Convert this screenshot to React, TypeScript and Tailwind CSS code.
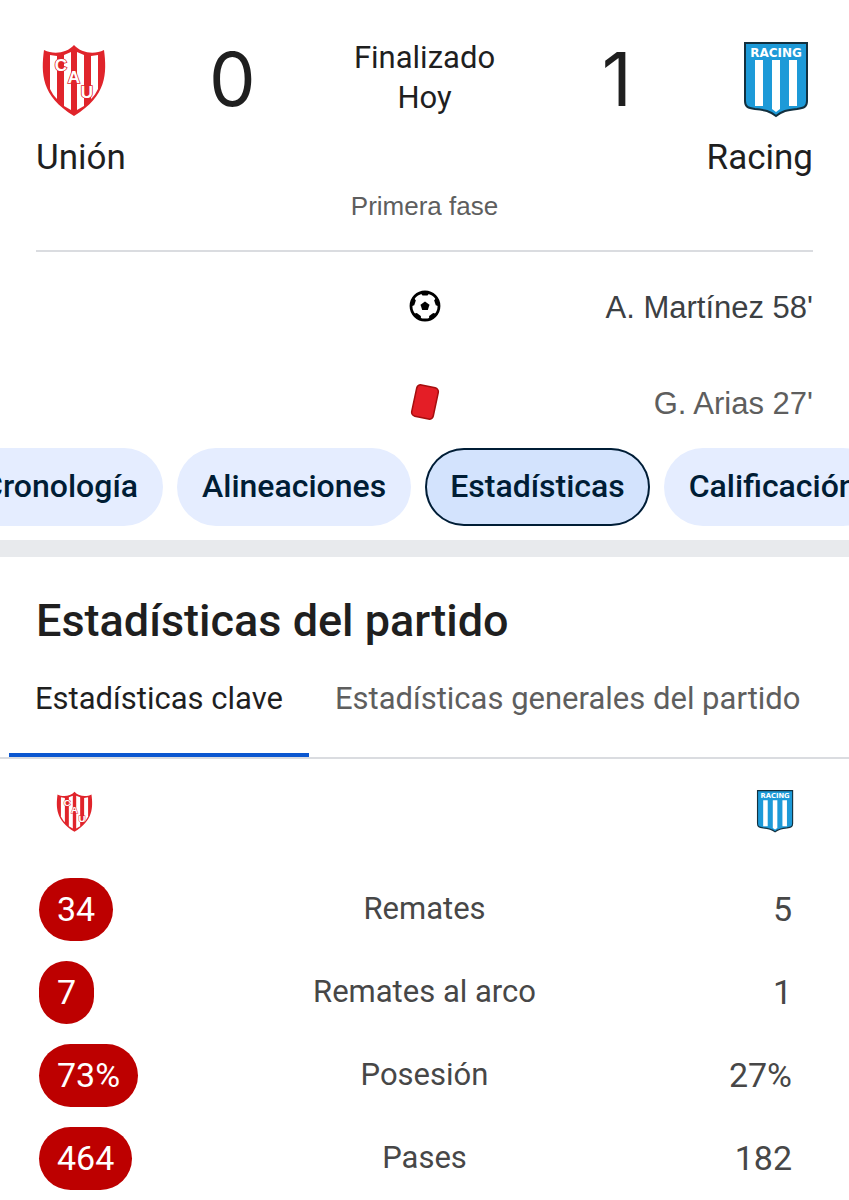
import clsx from "clsx";

type Stat = { label: string; home: string; away: string };

const CHIPS = ["Cronología", "Alineaciones", "Estadísticas", "Calificación"];

const TABS = ["Estadísticas clave", "Estadísticas generales del partido"];

const STATS: Stat[] = [
  { label: "Remates", home: "34", away: "5" },
  { label: "Remates al arco", home: "7", away: "1" },
  { label: "Posesión", home: "73%", away: "27%" },
  { label: "Pases", home: "464", away: "182" },
];

function UnionCrest({ className }: { className?: string }) {
  return (
    <svg viewBox="0 0 76 76" role="img" aria-label="Unión" className={className}>
      <path
        d="M8 8 C18 13 31 11 38 3 C45 11 58 13 68 8 C71 31 71 54 38 74 C5 54 5 31 8 8Z"
        fill="#e0242b"
      />
      <g fill="#fff">
        <path d="M14 13 L21 14 V57 C18 54 16 51 14 47Z" />
        <path d="M28 13 L35 10 V68 L28 64Z" />
        <path d="M41 10 L48 13 V64 L41 68Z" />
        <path d="M55 14 L62 13 V47 C60 51 58 54 55 57Z" />
      </g>
      <g
        fill="#fff"
        stroke="#e0242b"
        strokeWidth="1.500"
        paintOrder="stroke"
        fontFamily="Liberation Sans, sans-serif"
        fontWeight="700"
        fontSize="17"
        textAnchor="middle"
      >
        <text x="25" y="29">C</text>
        <text x="38" y="41">A</text>
        <text x="51" y="56">U</text>
      </g>
    </svg>
  );
}

function RacingCrest({ className }: { className?: string }) {
  return (
    <svg viewBox="0 0 76 76" role="img" aria-label="Racing" className={className}>
      <path
        d="M8 1 H70 V59 C70 65 67 66 60 67 C50 68 45 69 39 74 C33 69 28 68 18 67 C11 66 8 65 8 59Z"
        fill="#1d9ad8"
        stroke="#12303f"
        strokeWidth="2"
      />
      <path d="M18 18 H26 V64 H18Z M35 18 H43 V67 L39 70 L35 67Z M52 18 H60 V64 H52Z" fill="#fff" />
      <text
        x="39"
        y="15"
        fill="#fff"
        fontFamily="DejaVu Sans, sans-serif"
        fontWeight="700"
        fontSize="12"
        textAnchor="middle"
      >
        RACING
      </text>
    </svg>
  );
}

function BallIcon() {
  return (
    <svg viewBox="0 0 32 32" role="img" aria-label="Gol" className="size-8">
      <circle cx="16" cy="16" r="14" fill="#fff" stroke="#000" strokeWidth="2.800" />
      <path d="M16 11.500 L20.500 14.800 L18.800 20 H13.200 L11.500 14.800Z" />
      {[0, 72, 144, 216, 288].map((angle) => (
        <path key={angle} d="M11.500 3 L13.500 5.500 H18.500 L20.500 3 L16 1.500Z" transform={`rotate(${angle} 16 16)`} />
      ))}
    </svg>
  );
}

function RedCardIcon() {
  return (
    <svg viewBox="0 0 36 36" role="img" aria-label="Tarjeta roja" className="size-9">
      <rect
        x="7"
        y="2"
        width="22"
        height="32"
        rx="4"
        fill="#e41e26"
        stroke="#a50e0e"
        strokeWidth="1.500"
        transform="rotate(12 18 18)"
      />
    </svg>
  );
}

function Scoreboard() {
  return (
    <header className="mx-9 border-b-2 border-[#dadce0] pt-[42px] pb-7 text-[#1f1f1f]">
      <div className="flex items-start">
        <UnionCrest className="size-[76px]" />
        <div className="flex-1 text-center font-[Inter,sans-serif] text-[74px] leading-[74px]">0</div>
        <div className="w-36 text-center text-[31px] leading-10">
          <p className="-mt-1">Finalizado</p>
          <p>Hoy</p>
        </div>
        <div className="flex-1 text-center font-[Inter,sans-serif] text-[74px] leading-[74px]">1</div>
        <RacingCrest className="size-[76px]" />
      </div>
      <div className="mt-5 flex justify-between text-[35px] leading-10">
        <span>Unión</span>
        <span>Racing</span>
      </div>
      <p className="mt-3 text-center font-['Liberation_Sans',sans-serif] text-[26px] leading-8 text-[#5e5e5e]">
        Primera fase
      </p>
    </header>
  );
}

function Events() {
  return (
    <ul className="px-9 pt-7 font-['Liberation_Sans',sans-serif] text-[31px]">
      <li className="grid h-14 grid-cols-[1fr_auto_1fr] items-center text-[#3c4043]">
        <span className="col-start-2 pb-1">
          <BallIcon />
        </span>
        <span className="text-right">A. Martínez 58'</span>
      </li>
      <li className="mt-10 grid h-14 grid-cols-[1fr_auto_1fr] items-center text-[#5e5e5e]">
        <span className="col-start-2 pb-1">
          <RedCardIcon />
        </span>
        <span className="text-right">G. Arias 27'</span>
      </li>
    </ul>
  );
}

function Chips({ active }: { active: string }) {
  return (
    <nav className="overflow-hidden pt-4 pb-[14px]">
      <div className="-ml-[43px] flex gap-[14px]">
        {CHIPS.map((chip) => (
          <button
            key={chip}
            type="button"
            className={clsx(
              "h-[78px] shrink-0 rounded-full px-[25px] pb-0.5 text-[32px] font-medium text-[#001d35]",
              chip === active ? "bg-[#d3e3fd] ring-2 ring-inset ring-[#001d35]" : "bg-[#e5edff]",
            )}
          >
            {chip}
          </button>
        ))}
      </div>
    </nav>
  );
}

function StatsTable() {
  return (
    <table className="w-full table-fixed text-[#474747]">
      <thead>
        <tr className="h-[109px]">
          <th scope="col" className="w-1/4 pb-1 pl-[53px]">
            <UnionCrest className="size-[43px]" />
          </th>
          <td />
          <th scope="col" className="w-1/4 pr-[53px] pb-1">
            <RacingCrest className="ml-auto size-[43px]" />
          </th>
        </tr>
      </thead>
      <tbody>
        {STATS.map((stat) => (
          <tr key={stat.label} className="h-[83px]">
            <td className="pl-[39px]">
              <span className="inline-block rounded-full bg-[#bd0000] px-[18px] text-[34px] leading-[63px] text-white">
                {stat.home}
              </span>
            </td>
            <th scope="row" className="text-center text-[31px] font-normal">
              {stat.label}
            </th>
            <td className="pr-[57px] text-right text-[34px]">{stat.away}</td>
          </tr>
        ))}
      </tbody>
    </table>
  );
}

export default function App() {
  return (
    <div className="min-h-screen bg-white font-[Roboto,sans-serif]">
      <Scoreboard />
      <Events />
      <Chips active="Estadísticas" />
      <main className="border-t-[17px] border-[#e8eaed]">
        <h1 className="px-9 pt-9 text-[45px] leading-[56px] font-medium text-[#1f1f1f]">
          Estadísticas del partido
        </h1>
        <div role="tablist" className="flex border-b-2 border-[#dadce0] px-[9px]">
          {TABS.map((tab, i) => (
            <button
              key={tab}
              type="button"
              role="tab"
              aria-selected={i === 0}
              className={clsx(
                "h-[108px] border-b-4 px-[26px] pb-1 text-[31px] whitespace-nowrap",
                i === 0 ? "border-[#0b57d0] text-[#1f1f1f]" : "border-transparent text-[#5e5e5e]",
              )}
            >
              {tab}
            </button>
          ))}
        </div>
        <StatsTable />
      </main>
    </div>
  );
}
